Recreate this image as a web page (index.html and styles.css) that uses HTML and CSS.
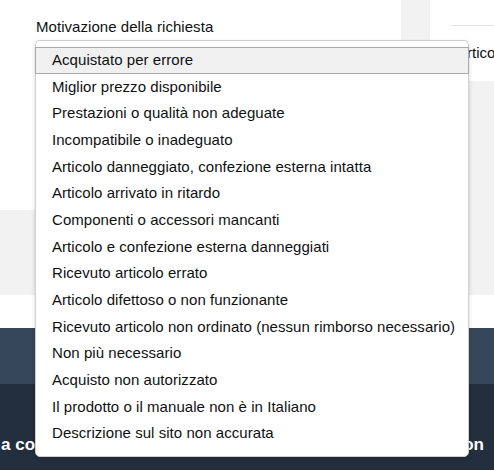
FILE: index.html
```html
<!DOCTYPE html>
<html lang="it">
<head>
<meta charset="utf-8">
<title>Motivazione della richiesta</title>
<link rel="stylesheet" href="styles.css">
</head>
<body>
<div class="page">
  <div class="top">
    <section class="card card-left">
      <div class="label">Motivazione della richiesta</div>
    </section>
    <div class="gutter"></div>
    <section class="card card-right">
      <div class="rule"></div>
      <div class="side-text">Articolo</div>
    </section>
  </div>
  <div class="strip"></div>
  <div class="backtop"></div>
  <footer class="footer">
    <span class="foot-left">a con</span>
    <span class="foot-right">Amazon</span>
  </footer>
</div>

<ul class="dropdown">
  <li class="selected">Acquistato per errore</li>
  <li>Miglior prezzo disponibile</li>
  <li>Prestazioni o qualità non adeguate</li>
  <li>Incompatibile o inadeguato</li>
  <li>Articolo danneggiato, confezione esterna intatta</li>
  <li>Articolo arrivato in ritardo</li>
  <li>Componenti o accessori mancanti</li>
  <li>Articolo e confezione esterna danneggiati</li>
  <li>Ricevuto articolo errato</li>
  <li>Articolo difettoso o non funzionante</li>
  <li>Ricevuto articolo non ordinato (nessun rimborso necessario)</li>
  <li>Non più necessario</li>
  <li>Acquisto non autorizzato</li>
  <li>Il prodotto o il manuale non è in Italiano</li>
  <li>Descrizione sul sito non accurata</li>
</ul>
</body>
</html>
```

FILE: styles.css
```css
* { box-sizing: border-box; }
html, body {
  margin: 0;
  padding: 0;
  width: 494px;
  height: 470px;
  overflow: hidden;
  font-family: "Liberation Sans", Arial, sans-serif;
  color: #0f1111;
  background: #fff;
}
.page {
  display: flex;
  flex-direction: column;
  height: 470px;
}
.top {
  display: grid;
  grid-template-columns: 401px 29px 1fr;
  align-items: start;
  height: 295px;
  background: #f2f2f2;
}
.card { background: #fff; }
.card-left {
  height: 210px;
  padding: 18px 0 0 36px;
}
.label {
  font-size: 15px;
  line-height: 18px;
  letter-spacing: 0.05px;
}
.card-right {
  height: 81px;
  padding: 25px 0 0 21px;
  overflow: hidden;
}
.rule {
  height: 1px;
  background: #e3e3e3;
}
.side-text {
  margin-top: 17px;
  padding-left: 6px;
  font-size: 15px;
  line-height: 20px;
  white-space: nowrap;
}
.strip { height: 33px; background: #fff; }
.backtop { height: 56px; background: #37475a; }
.footer {
  flex: 1;
  background: #232f3e;
  display: flex;
  justify-content: space-between;
  align-items: flex-start;
  padding: 51px 10px 0 1px;
  color: #fff;
  font-weight: bold;
  font-size: 17px;
  line-height: 20px;
}
.dropdown {
  position: absolute;
  left: 35px;
  top: 40px;
  width: 434px;
  margin: 0;
  padding: 6px 0 9px;
  list-style: none;
  background: #fff;
  border: 1px solid #cfcfcf;
  border-radius: 5px;
  box-shadow: 0 2px 4px rgba(0, 0, 0, 0.18);
  font-size: 15px;
}
.dropdown li {
  height: 26.67px;
  line-height: 26.67px;
  margin: 0 -1px;
  padding-left: 17px;
  white-space: nowrap;
  letter-spacing: 0.05px;
}
.dropdown li.selected {
  background: #f0f0f0;
  outline: 1px solid #a9a9a9;
  outline-offset: -1px;
}
```
